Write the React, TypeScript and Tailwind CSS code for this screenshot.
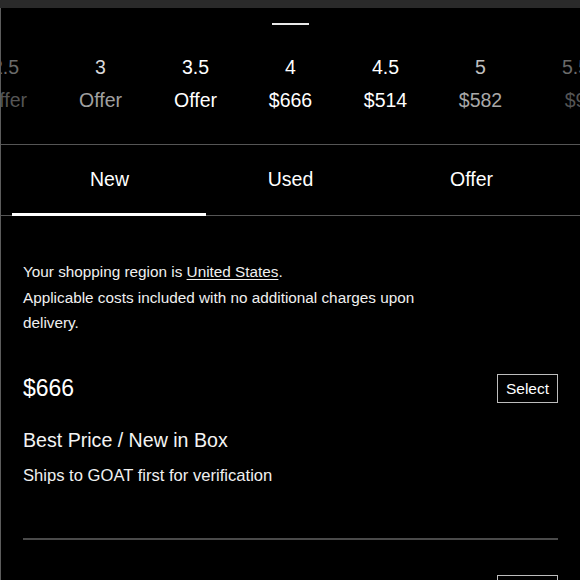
import React from "react";

const sizes = [
  { s: "2.5", p: "Offer", n: "text-[#6a6a6a]", c: "text-[#555555]" },
  { s: "3", p: "Offer", n: "text-[#d8d8d8]", c: "text-[#a0a0a0]" },
  { s: "3.5", p: "Offer", n: "text-white", c: "text-white" },
  { s: "4", p: "$666", n: "text-white", c: "text-white" },
  { s: "4.5", p: "$514", n: "text-white", c: "text-white" },
  { s: "5", p: "$582", n: "text-[#c0c0c0]", c: "text-[#a8a8a8]" },
  { s: "5.5", p: "$9", n: "text-[#6a6a6a]", c: "text-[#555555]" },
];

export default function App() {
  return (
    <div
      className="w-[580px] h-[580px] bg-black overflow-hidden text-white"
      style={{ fontFamily: '"Liberation Sans", Arial, sans-serif' }}
    >
      <div className="h-[8px] bg-[#2a2a2a]" />
      <div className="border-l border-[#5c5c5c] h-[572px]">
        <div className="pt-[15px]">
          <div className="w-[37px] h-[2px] bg-[#e8e8e8] ml-[271px]" />
        </div>
        <div className="mt-[26px] flex justify-center overflow-hidden">
          {sizes.map((x) => (
            <div key={x.s} className="w-[95px] shrink-0 flex flex-col items-center text-[19.5px]">
              <div className={`leading-[33px] ${x.n}`}>{x.s}</div>
              <div className={`leading-[33px] ${x.c}`}>{x.p}</div>
            </div>
          ))}
        </div>
        <div className="mt-[27px] h-px bg-[#555555]" />
        <div className="h-[68px] flex items-center px-[18px] text-[19.5px] pt-[2px]">
          <div className="flex-1 text-center">New</div>
          <div className="flex-1 text-center">Used</div>
          <div className="flex-1 text-center">Offer</div>
        </div>
        <div className="h-[3px] flex items-end">
          <div className="w-[11px] h-px bg-[#555555]" />
          <div className="w-[194px] h-[3px] bg-white" />
          <div className="flex-1 h-px bg-[#555555]" />
        </div>
        <div className="pl-[22px] pr-[22px]">
          <div className="mt-[43px] text-[15.3px] leading-[25.5px] text-[#f0f0f0]">
            <div>
              Your shopping region is <span className="underline underline-offset-2">United States</span>.
            </div>
            <div>Applicable costs included with no additional charges upon</div>
            <div>delivery.</div>
          </div>
          <div className="mt-[38px] flex items-center justify-between h-[29px]">
            <div className="text-[23px]">$666</div>
            <div className="w-[61px] h-[29px] border border-[#bdbdbd] flex items-center justify-center text-[15.5px] pt-px">
              Select
            </div>
          </div>
          <div className="mt-[25px] text-[19.6px] leading-[24px] text-[#f4f4f4]">Best Price / New in Box</div>
          <div className="mt-[13px] text-[16.6px] leading-[22px] text-[#f0f0f0]">
            Ships to GOAT first for verification
          </div>
          <div className="mt-[51px] h-[2px] bg-[#4a4a4a]" />
          <div className="mt-[35px] flex justify-end">
            <div className="w-[61px] h-[29px] border border-[#bdbdbd]" />
          </div>
        </div>
      </div>
    </div>
  );
}
